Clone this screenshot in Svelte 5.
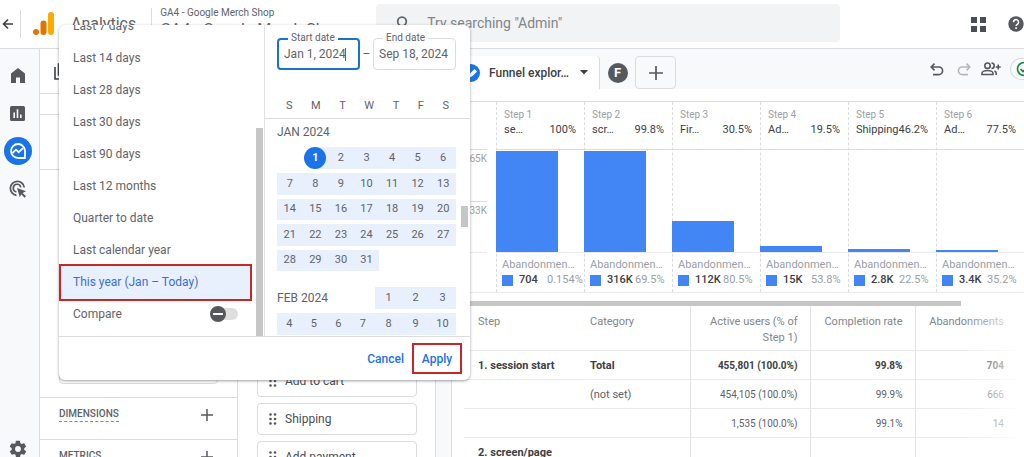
<script>
	let startDate = $state('Jan 1, 2024');
	let endDate = $state('Sep 18, 2024');
	let selected = $state('This year (Jan – Today)');
	let compare = $state(false);

	const ranges = [
		'Last 7 days',
		'Last 14 days',
		'Last 28 days',
		'Last 30 days',
		'Last 90 days',
		'Last 12 months',
		'Quarter to date',
		'Last calendar year',
		'This year (Jan – Today)'
	];

	const weekdays = ['S', 'M', 'T', 'W', 'T', 'F', 'S'];
	const january = Array.from({ length: 31 }, (_, i) => i + 1);
	const february = Array.from({ length: 10 }, (_, i) => i + 1);

	const events = ['Add to cart', 'Shipping', 'Add payment'];

	const steps = [
		{ name: 'se…', rate: '100%', height: 101, lost: '704', lostRate: '0.154%' },
		{ name: 'scr…', rate: '99.8%', height: 101, lost: '316K', lostRate: '69.5%' },
		{ name: 'Fir…', rate: '30.5%', height: 31, lost: '112K', lostRate: '80.5%' },
		{ name: 'Ad…', rate: '19.5%', height: 6, lost: '15K', lostRate: '53.8%' },
		{ name: 'Shipping', rate: '46.2%', height: 3, lost: '2.8K', lostRate: '22.5%' },
		{ name: 'Ad…', rate: '77.5%', height: 2, lost: '3.4K', lostRate: '35.2%' }
	];

	const rows = [
		{ step: '1. session start', category: 'Total', users: '455,801 (100.0%)', rate: '99.8%', lost: '704', total: true },
		{ step: '', category: '(not set)', users: '454,105 (100.0%)', rate: '99.9%', lost: '666' },
		{ step: '', category: '', users: '1,535 (100.0%)', rate: '99.1%', lost: '14' },
		{ step: '2. screen/page', category: '', users: '', rate: '', lost: '', total: true }
	];
</script>

<div class="page">
	<header class="topbar">
		<button class="icon-btn back" aria-label="Back">
			<svg width="12" height="12" viewBox="0 0 12 12"><path d="M11 6H2M6 1.5L1.5 6L6 10.5" fill="none" stroke="#3c4043" stroke-width="1.6" /></svg>
		</button>
		<span class="divider"></span>
		<svg class="logo" width="22" height="24" viewBox="0 0 22 24">
			<rect x="15" y="0" width="6" height="23" rx="3" fill="#f9ab00" />
			<rect x="7.5" y="8.5" width="6" height="14.5" rx="3" fill="#e37400" />
			<circle cx="3" cy="20" r="3" fill="#e37400" />
		</svg>
		<span class="brand">Analytics</span>
		<div class="property">
			<span class="account">GA4 - Google Merch Shop</span>
			<span class="property-name">GA4 - Google Merch Shop</span>
		</div>
		<label class="search">
			<svg width="14" height="14" viewBox="0 0 14 14"><circle cx="6" cy="5.5" r="4.3" fill="none" stroke="#5f6368" stroke-width="1.8" /><path d="M9 9l4 4" stroke="#5f6368" stroke-width="1.8" /></svg>
			<input type="search" placeholder={'Try searching "Admin"'} aria-label="Search" />
		</label>
		<div class="top-actions">
			<button class="icon-btn" aria-label="Apps">
				<svg width="15" height="15" viewBox="0 0 15 15" fill="#4a4d51"><path d="M0 0h6v6H0zM9 0h6v6H9zM0 9h6v6H0zM9 9h6v6H9z" /></svg>
			</button>
			<button class="icon-btn" aria-label="Help">
				<svg width="16" height="16" viewBox="0 0 17 17"><circle cx="8.5" cy="8.5" r="8.2" fill="#55585c" /><path d="M5.8 6.6a2.7 2.7 0 1 1 4.3 2.1c-1 .7-1.5 1.1-1.5 2" fill="none" stroke="#fff" stroke-width="1.6" /><rect x="7.7" y="12" width="1.8" height="1.7" fill="#fff" /></svg>
			</button>
		</div>
	</header>

	<div class="workspace">
		<nav class="rail" aria-label="Main">
			<a href="#home" aria-label="Home">
				<svg width="14" height="15" viewBox="0 0 14 15"><path d="M7 0L0 5.5V15h5V9.5h4V15h5V5.5z" fill="#55585c" /></svg>
			</a>
			<a href="#reports" aria-label="Reports">
				<svg width="15" height="15" viewBox="0 0 15 15"><rect width="15" height="15" rx="1.5" fill="#55585c" /><path d="M4.2 6.5v5.5M7.5 3.2v8.8M10.8 8.5v3.5" stroke="#f8f9fa" stroke-width="1.6" /></svg>
			</a>
			<a href="#explore" class="active" aria-label="Explore">
				<svg width="20" height="20" viewBox="0 0 20 20" fill="none" stroke="#fff" stroke-width="1.8"><path d="M17 10v7h-7a7 7 0 1 1 7-7z" /><path d="M4.5 12l3.5-3.3 2.7 2.5 4.3-4" /></svg>
			</a>
			<a href="#ads" aria-label="Advertising">
				<svg width="18" height="18" viewBox="0 0 18 18"><path d="M7.5 15.3A7 7 0 1 1 15.3 7.5M7.4 11.8a3.8 3.8 0 1 1 4.4-4.4" fill="none" stroke="#55585c" stroke-width="1.7" /><path d="M8 8l9 3.2-3.4 1.7 3.4 3.4-1.4 1.4-3.4-3.4-1.4 3z" fill="#55585c" /></svg>
			</a>
			<a href="#admin" class="admin" aria-label="Admin">
				<svg width="20" height="20" viewBox="0 0 24 24"><path fill="#55585c" d="M19.4 13a7.5 7.5 0 0 0 0-2l2.1-1.6c.2-.2.2-.4.1-.6l-2-3.500c-.1-.2-.4-.3-.6-.2l-2.500 1a7.300 7.300 0 0 0-1.700-1l-.4-2.600a.5.5 0 0 0-.5-.4h-4a.5.5 0 0 0-.5.4L9 5.100a7.300 7.300 0 0 0-1.700 1l-2.500-1c-.2-.1-.5 0-.6.2l-2 3.500c-.1.200-.1.400.1.600L4.500 11a7.500 7.500 0 0 0 0 2l-2.100 1.600c-.2.200-.2.400-.1.600l2 3.500c.1.200.4.300.6.200l2.500-1c.5.400 1.100.700 1.700 1l.4 2.600c0 .2.200.4.500.4h4c.2 0 .5-.2.500-.4l.4-2.600a7.300 7.300 0 0 0 1.700-1l2.500 1c.2.100.5 0 .6-.2l2-3.500c.1-.2.1-.4-.1-.6zM12 15.500a3.500 3.500 0 1 1 0-7 3.500 3.500 0 0 1 0 7z" /></svg>
			</a>
		</nav>

		<aside class="variables">
			<div class="panel-title">
				<svg width="17" height="17" viewBox="0 0 17 17" fill="none" stroke="#3c4043" stroke-width="1.6"><path d="M1 4v12h11M4.500 1h11v11h-11z" /></svg>
			</div>
			<div class="panel-gap"></div>
			<div class="panel-name"></div>
			<div class="segments"><div class="segment-card"></div></div>
			<div class="section">
				<span class="section-label">DIMENSIONS</span>
				<button class="icon-btn" aria-label="Add dimension">
					<svg width="12" height="12" viewBox="0 0 12 12"><path d="M6 0v12M0 6h12" stroke="#55585c" stroke-width="1.5" /></svg>
				</button>
			</div>
			<div class="section">
				<span class="section-label">METRICS</span>
				<button class="icon-btn" aria-label="Add metric">
					<svg width="12" height="12" viewBox="0 0 12 12"><path d="M6 0v12M0 6h12" stroke="#55585c" stroke-width="1.5" /></svg>
				</button>
			</div>
		</aside>

		<aside class="settings">
			{#each events as event}
				<button class="chip">
					<svg width="8" height="12" viewBox="0 0 8 12" fill="#55585c">
						{#each [1.5, 6, 10.5] as y}
							<circle cx="1.500" cy={y} r="1.3" /><circle cx="6" cy={y} r="1.3" />
						{/each}
					</svg>
					{event}
				</button>
			{/each}
		</aside>

		<main class="canvas">
			<div class="tabs">
				<button class="tab current">
					<svg width="18" height="18" viewBox="0 0 18 18"><circle cx="9" cy="9" r="9" fill="#1a73e8" /><path d="M6 14l1.500-4 5-5 2.500 2.500-5 5z" fill="#fff" /></svg>
					<span>Funnel explor…</span>
					<svg width="8" height="5" viewBox="0 0 8 5"><path d="M0 0h8L4 4.500z" fill="#3c4043" /></svg>
				</button>
				<button class="tab"><span class="letter">F</span></button>
				<button class="tab add" aria-label="Add tab">
					<svg width="14" height="14" viewBox="0 0 14 14"><path d="M7 0v14M0 7h14" stroke="#55585c" stroke-width="1.700" /></svg>
				</button>
				<div class="tools">
					<button class="icon-btn" aria-label="Undo">
						<svg width="14" height="13" viewBox="0 0 14 13" fill="none" stroke="#55585c" stroke-width="1.600"><path d="M4.500 .6L1.200 4l3.300 3.400M1.500 4h7.300a3.800 3.800 0 0 1 0 7.600H3" /></svg>
					</button>
					<button class="icon-btn" aria-label="Redo">
						<svg width="14" height="13" viewBox="0 0 14 13" fill="none" stroke="#b4b7ba" stroke-width="1.600"><path d="M9.500 .6L12.800 4 9.500 7.400M12.500 4H5.200a3.800 3.800 0 0 0 0 7.600H11" /></svg>
					</button>
					<button class="icon-btn" aria-label="Share">
						<svg width="20" height="14" viewBox="0 0 20 14" fill="none" stroke="#55585c" stroke-width="1.600"><circle cx="6.500" cy="3.700" r="2.700" /><path d="M1 12.500v-1.300c0-1.700 3-2.700 5.500-2.700s5.500 1 5.500 2.700v1.300zM10.500 1a2.700 2.700 0 0 1 0 5.400M13.500 9c1.300.6 1.700 1.300 1.700 2.200V13M17.200 2.500v5M14.700 5h5" /></svg>
					</button>
					<button class="status" aria-label="Data quality">
						<svg width="16" height="16" viewBox="0 0 16 16" fill="none" stroke="#188038" stroke-width="1.600"><circle cx="8" cy="8" r="6.500" /><path d="M4.500 8l2.500 2.500 4.500-4.500" /></svg>
					</button>
				</div>
			</div>

			<section class="chart">
				<div class="axis">
					<span>65K</span>
					<span>33K</span>
				</div>
				<div class="steps">
					{#each steps as step, i}
						<div class="step">
							<div class="step-head">
								<span class="step-index">Step {i + 1}</span>
								<div class="step-line"><span>{step.name}</span><span>{step.rate}</span></div>
							</div>
							<div class="plot"><div class="bar" style="height: {step.height}px"></div></div>
							<div class="lost">
								<span>Abandonmen…</span>
								<div class="lost-line">
									<i class="swatch"></i>
									<b>{step.lost}</b>
									<span>{step.lostRate}</span>
								</div>
							</div>
						</div>
					{/each}
				</div>
			</section>

			<div class="scrollbar"></div>

			<div class="table-wrap">
				<table>
					<thead>
						<tr>
							<th class="col-step">Step</th>
							<th class="col-category">Category</th>
							<th class="num col-users">Active users (% of<br />Step 1)</th>
							<th class="num col-rate">Completion rate</th>
							<th class="num">Abandonments</th>
						</tr>
					</thead>
					<tbody>
						{#each rows as row}
							<tr class:total={row.total}>
								<td class="col-step">{row.step}</td>
								<td>{row.category}</td>
								<td class="num">{row.users}</td>
								<td class="num">{row.rate}</td>
								<td class="num">{row.lost}</td>
							</tr>
						{/each}
					</tbody>
				</table>
			</div>
		</main>
	</div>

	<div class="picker" role="dialog" aria-label="Date range">
		<div class="picker-body">
			<div class="ranges">
				{#each ranges as range}
					<button class="range" class:selected={selected === range} onclick={() => (selected = range)}>{range}</button>
				{/each}
				<label class="compare">
					Compare
					<input type="checkbox" role="switch" bind:checked={compare} />
				</label>
			</div>
			<div class="ranges-scroll"></div>
			<div class="calendar">
				<div class="dates">
					<div class="field focused">
						<label for="start">Start date</label>
						<input id="start" bind:value={startDate} />
						<span class="caret"></span>
					</div>
					<span class="dash">–</span>
					<div class="field">
						<label for="end">End date</label>
						<input id="end" bind:value={endDate} />
					</div>
				</div>
				<div class="weekdays">
					{#each weekdays as day}
						<span>{day}</span>
					{/each}
				</div>
				<div class="months">
					<div class="month-label">JAN 2024</div>
					<div class="days january">
						{#each january as day}
							<button class:start={day === 1}><span>{day}</span></button>
						{/each}
					</div>
					<div class="days february">
						<div class="month-label">FEB 2024</div>
						{#each february as day}
							<button><span>{day}</span></button>
						{/each}
					</div>
				</div>
				<div class="calendar-thumb"></div>
			</div>
		</div>
		<div class="picker-footer">
			<button>Cancel</button>
			<button class="apply">Apply</button>
		</div>
	</div>
</div>

<style>
	:global(body) {
		margin: 0;
		overflow: hidden;
		background: #fff;
	}

	.page,
	.page * {
		box-sizing: border-box;
	}

	.page {
		position: relative;
		display: flex;
		flex-direction: column;
		height: 100vh;
		font-family: Roboto, 'Liberation Sans', sans-serif;
		font-size: 12px;
		line-height: 16px;
		color: #5f6368;
	}

	button,
	input {
		margin: 0;
		padding: 0;
		border: 0;
		background: none;
		font: inherit;
		color: inherit;
	}

	svg {
		display: block;
		flex: none;
	}

	.icon-btn {
		display: flex;
		align-items: center;
	}

	/* top bar */
	.topbar {
		display: flex;
		align-items: center;
		flex: none;
		height: 49px;
		padding-left: 2px;
		border-bottom: 1px solid #dadce0;
		overflow: hidden;
	}

	.divider {
		width: 1px;
		height: 28px;
		margin: 0 12px 0 6px;
		background: #dadce0;
	}

	.brand {
		margin: 0 15px 0 16px;
		font-size: 16px;
		line-height: 24px;
	}

	.property {
		display: flex;
		flex-direction: column;
		align-self: flex-start;
		width: 217px;
		height: 36px;
		margin-top: 8px;
		padding-left: 8px;
		border-left: 1px solid #dadce0;
		white-space: nowrap;
	}

	.account {
		font-size: 10px;
		line-height: 10px;
	}

	.property-name {
		font-size: 16px;
		line-height: 24px;
	}

	.search {
		display: flex;
		align-items: center;
		gap: 17px;
		flex: 0 1 464px;
		height: 38px;
		margin: 0 auto 3px 8px;
		padding: 0 20px;
		border-radius: 4px;
		background: #f1f3f4;
	}

	.search input {
		flex: 1;
		min-width: 0;
		outline: none;
		font-size: 14px;
	}

	.search input::placeholder {
		color: #80868b;
		opacity: 1;
	}

	.top-actions {
		display: flex;
		align-items: center;
		gap: 22px;
		flex: none;
	}

	/* left rail */
	.workspace {
		display: flex;
		flex: 1;
		min-height: 0;
		overflow: hidden;
	}

	.rail {
		display: flex;
		flex-direction: column;
		align-items: center;
		gap: 10px;
		flex: none;
		width: 40px;
		padding: 12px 4px 0 0;
		border-right: 1px solid #dadce0;
		background: #f8f9fa;
	}

	.rail a {
		display: flex;
		align-items: center;
		justify-content: center;
		width: 28px;
		height: 28px;
		border-radius: 50%;
	}

	.rail .active {
		background: #1a73e8;
	}

	.rail .admin {
		margin-top: auto;
		height: 16px;
	}

	/* variables and settings */
	.variables {
		flex: none;
		width: 198px;
		border-right: 1px solid #dadce0;
	}

	.panel-title {
		height: 45px;
		padding: 14px;
		border-bottom: 1px solid #dadce0;
	}

	.panel-gap {
		height: 21px;
		border-bottom: 1px solid #dadce0;
	}

	.panel-name {
		height: 55px;
		border-bottom: 1px solid #dadce0;
	}

	.segments {
		height: 228px;
		padding: 13px 19px;
		border-bottom: 1px solid #dadce0;
	}

	.segment-card {
		height: 100%;
		border: 1px solid #dadce0;
		border-radius: 4px;
	}

	.section {
		display: flex;
		align-items: center;
		justify-content: space-between;
		height: 42px;
		padding: 0 24px 8px 19px;
		border-bottom: 1px solid #dadce0;
	}

	.section-label {
		border-bottom: 1px dashed #80868b;
		font-size: 10px;
		font-weight: 500;
		line-height: 14px;
	}

	.settings {
		display: flex;
		flex-direction: column;
		gap: 6px;
		flex: none;
		width: 198px;
		padding: 316px 18px 0 19px;
		border-right: 1px solid #dadce0;
		overflow: hidden;
	}

	.chip {
		display: flex;
		align-items: center;
		gap: 8px;
		flex: none;
		height: 32px;
		padding: 0 11px;
		border: 1px solid #dadce0;
		border-radius: 4px;
		color: #4a4d51;
	}

	/* canvas */
	.canvas {
		display: flex;
		flex-direction: column;
		flex: 1;
		min-width: 0;
		border-left: 15px solid #f8f9fa;
		background: #fff;
		box-shadow: inset 1px 0 #dadce0;
	}

	.tabs {
		display: flex;
		align-items: flex-end;
		flex: none;
		height: 40px;
		background: #f8f9fa;
	}

	.tab {
		display: flex;
		align-items: center;
		justify-content: center;
		height: 33px;
		width: 35px;
	}

	.tab.current {
		justify-content: flex-start;
		gap: 9px;
		width: 149px;
		padding-left: 11px;
		border-right: 1px solid #dadce0;
		border-radius: 4px 4px 0 0;
		background: #fff;
		font-weight: 500;
		color: #3c4043;
	}

	.tab.current span {
		width: 82px;
		text-align: left;
	}

	.tab.add {
		width: 41px;
		border: 1px solid #dadce0;
		border-radius: 4px;
	}

	.letter {
		width: 20px;
		border-radius: 50%;
		background: #55585c;
		font-size: 13px;
		font-weight: 700;
		line-height: 20px;
		color: #fff;
	}

	.tools {
		display: flex;
		align-items: center;
		gap: 13px;
		height: 40px;
		margin-left: auto;
	}

	.tools .icon-btn:nth-child(3) {
		margin-left: -3px;
	}

	.status {
		width: 14px;
		height: 22px;
		margin-left: -4px;
		padding-left: 5px;
		border: 1px solid #dadce0;
		border-right: 0;
		border-radius: 11px 0 0 11px;
		overflow: hidden;
	}

	.chart {
		display: flex;
		flex: none;
		margin-top: 12px;
		border-top: 1px solid #dadce0;
		border-bottom: 1px solid #e8eaed;
		font-size: 11px;
	}

	.axis {
		display: flex;
		flex-direction: column;
		flex: none;
		width: 36px;
		height: 151px;
		margin-right: 9px;
		padding-top: 47px;
		border-bottom: 1px solid #e8eaed;
		font-size: 10px;
		line-height: 18px;
		text-align: right;
		color: #9aa0a6;
	}

	.axis span {
		flex: 1;
		border-top: 1px solid #dadce0;
	}

	.steps {
		display: grid;
		grid-template-columns: repeat(6, 1fr);
		flex: 1;
	}

	.step {
		min-width: 0;
		border-left: 1px dashed #dadce0;
	}

	.step-head {
		height: 47px;
		padding: 5px 8px 0 7px;
	}

	.step-index {
		font-size: 10px;
		line-height: 14px;
		color: #9aa0a6;
	}

	.step-line {
		display: flex;
		justify-content: space-between;
		line-height: 14px;
		color: #3c4043;
	}

	.plot {
		display: flex;
		align-items: flex-end;
		height: 104px;
		margin-left: -1px;
		border-top: 1px solid #dadce0;
		border-bottom: 1px solid #e8eaed;
	}

	.bar {
		width: 70%;
		background: #4285f4;
	}

	.lost {
		height: 39px;
		padding: 4px 0 0 5px;
		white-space: nowrap;
		color: #9aa0a6;
	}

	.lost-line {
		display: flex;
		align-items: center;
		line-height: 14px;
	}

	.swatch {
		width: 11px;
		height: 11px;
		margin-right: 6px;
		background: #4285f4;
	}

	.lost b {
		width: 28px;
		font-weight: 500;
		color: #3c4043;
	}

	.scrollbar {
		flex: none;
		width: 89%;
		height: 5px;
		margin-top: 8px;
		background: #c6c6c6;
	}

	.table-wrap {
		position: relative;
		padding: 0 8px 0 13px;
		font-size: 11px;
	}

	/* fades the last column out towards the edge */
	.table-wrap::after {
		content: '';
		position: absolute;
		inset: 0 0 0 auto;
		width: 60px;
		background: linear-gradient(to right, rgba(255, 255, 255, 0), #fff);
	}

	table {
		width: 100%;
		border-collapse: collapse;
		table-layout: fixed;
	}

	th {
		height: 44px;
		padding: 8px 12px 4px 0;
		font-weight: 400;
		text-align: left;
		vertical-align: top;
		color: #80868b;
	}

	td {
		height: 29px;
		padding: 7px 12px 5px 0;
		vertical-align: top;
	}

	th,
	td {
		border-bottom: 1px solid #e8eaed;
	}

	.col-step {
		width: 126px;
		padding-left: 14px;
	}

	.col-category {
		width: 100px;
	}

	.col-users {
		width: 120px;
	}

	.col-rate {
		width: 105px;
	}

	.num {
		border-left: 1px solid #e0e2e5;
		text-align: right;
	}

	td.num {
		font-size: 10px;
	}

	.total {
		font-weight: 700;
		color: #3c4043;
	}

	/* date range picker, over the workspace */
	.picker {
		position: absolute;
		top: 25px;
		left: 59px;
		width: 411px;
		border-radius: 6px;
		background: #fff;
		box-shadow: 0 1px 3px rgba(60, 64, 67, 0.5);
		overflow: hidden;
	}

	.picker-body {
		display: flex;
		height: 312px;
		border-bottom: 1px solid #dadce0;
		overflow: hidden;
	}

	.ranges {
		display: flex;
		flex-direction: column;
		width: 193px;
		margin-top: -15px;
	}

	.range {
		flex: none;
		height: 32px;
		padding-left: 14px;
		text-align: left;
	}

	.range.selected {
		height: 37px;
		margin-top: -2px;
		padding: 0 0 2px 12px;
		border: 2px solid #c62828;
		background: #e8f0fe;
		color: #3c6fc4;
	}

	.compare {
		display: flex;
		align-items: center;
		justify-content: space-between;
		height: 26px;
		padding: 0 14px;
	}

	.compare input {
		display: flex;
		align-items: center;
		appearance: none;
		width: 28px;
		height: 12px;
		border-radius: 6px;
		background: #dedede;
	}

	.compare input::before {
		content: '';
		flex: none;
		width: 10px;
		height: 10px;
		border: 3px solid #55585c;
		border-radius: 50%;
		background: linear-gradient(#fff, #fff) center / 10px 2px no-repeat #55585c;
	}

	.ranges-scroll {
		align-self: flex-end;
		width: 7px;
		height: 208px;
		margin-left: 4px;
		background: #c6c6c6;
	}

	.calendar {
		position: relative;
		flex: 1;
		min-width: 0;
		margin-left: 1px;
		border-left: 1px solid #e0e2e5;
	}

	.dates {
		display: flex;
		align-items: center;
		justify-content: space-between;
		padding: 13px 14px 0 12px;
	}

	.field {
		position: relative;
		width: 83px;
		height: 32px;
		border: 1px solid #dadce0;
		border-radius: 4px;
	}

	.field.focused {
		border: 2px solid #1a73c8;
	}

	.field label {
		position: absolute;
		top: -9px;
		left: 9px;
		padding: 0 3px;
		background: #fff;
		font-size: 10px;
	}

	.focused label {
		top: -10px;
	}

	.field input {
		width: 100%;
		height: 100%;
		padding-left: 5px;
		outline: none;
	}

	.caret {
		position: absolute;
		top: 8px;
		left: 66px;
		width: 1px;
		height: 13px;
		background: #1a73c8;
	}

	.weekdays {
		display: flex;
		justify-content: space-between;
		margin-top: 24px;
		padding: 4px 21px;
		border-bottom: 1px solid #dadce0;
		font-size: 11px;
		line-height: 16px;
	}

	.months {
		padding: 5px 14px 0 12px;
	}

	.month-label {
		line-height: 16px;
	}

	.days {
		display: grid;
		font-size: 11px;
	}

	.days button {
		min-width: 0;
		background: #e8f0fe;
	}

	.january {
		grid-template-columns: repeat(7, 1fr);
		grid-template-rows: repeat(5, 1fr);
		row-gap: 4px;
		height: 124px;
		margin-top: 7px;
	}

	.days .start {
		display: flex;
		align-items: center;
		justify-content: center;
		grid-column: 2;
		background: linear-gradient(to right, #fff 50%, #e8f0fe 50%);
	}

	.start span {
		flex: none;
		width: 22px;
		border-radius: 50%;
		background: #1a73e8;
		font-weight: 700;
		line-height: 22px;
		color: #fff;
	}

	.february {
		grid-template-columns: repeat(4, 10fr) repeat(3, 11fr);
		grid-auto-rows: 22px;
		row-gap: 4px;
		margin-top: 16px;
	}

	.february .month-label {
		grid-column: span 4;
		font-size: 12px;
		line-height: 22px;
	}

	.calendar-thumb {
		position: absolute;
		top: 181px;
		right: 2px;
		width: 7px;
		height: 21px;
		background: #c6c6c6;
	}

	.picker-footer {
		display: flex;
		align-items: center;
		justify-content: flex-end;
		gap: 8px;
		height: 43px;
		padding-right: 8px;
		font-weight: 500;
		color: #1a73e8;
	}

	.apply {
		width: 50px;
		height: 31px;
		border: 2px solid #c62828;
	}
</style>
